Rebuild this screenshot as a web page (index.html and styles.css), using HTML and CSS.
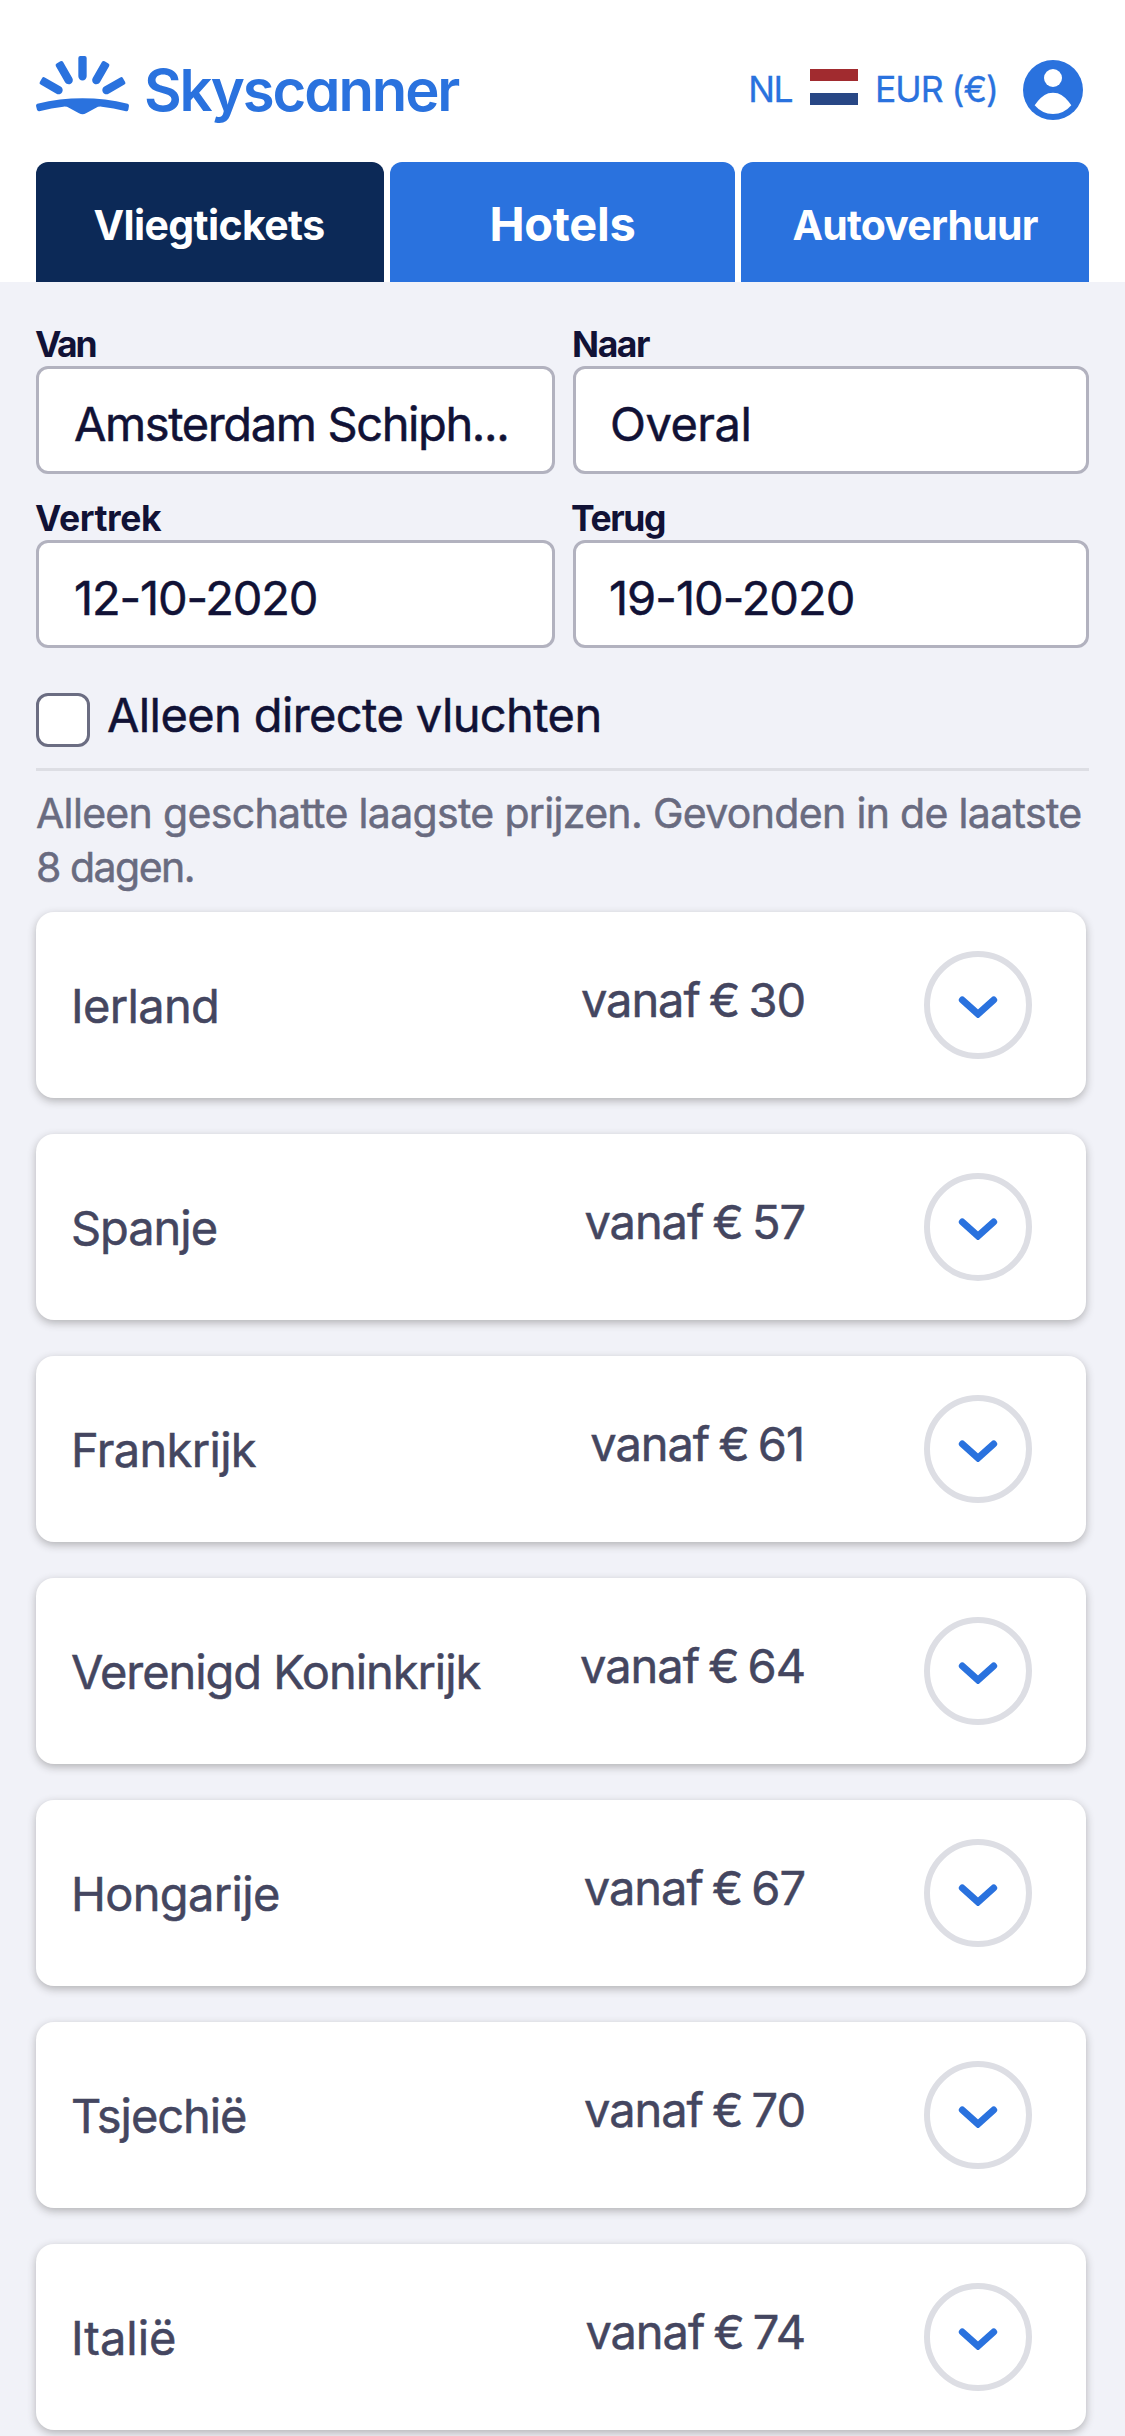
FILE: index.html
```
<!DOCTYPE html>
<html lang="nl">
<head>
<meta charset="utf-8">
<title>Skyscanner</title>
<link rel="stylesheet" href="styles.css">
</head>
<body>
<svg class="defs" width="0" height="0" aria-hidden="true">
  <symbol id="chevron" viewBox="1194 167 120 80">
    <path d="M1207 191L1254 233L1301 191" fill="none" stroke="#2a72de" stroke-width="21" stroke-linecap="round" stroke-linejoin="miter"/>
  </symbol>
</svg>
<header class="header">
  <a class="logo">
    <svg class="logo-mark" viewBox="108 77 279 176" fill="currentColor" aria-hidden="true">
      <defs><path id="ray" d="M241 77h13q6 0 6 6v55a12.5 12.5 0 0 1-25 0v-55q0-6 6-6z"/></defs>
      <use href="#ray"/>
      <use href="#ray" transform="rotate(-30 247.5 221)"/>
      <use href="#ray" transform="rotate(30 247.5 221)"/>
      <use href="#ray" transform="rotate(-60 247.5 221)"/>
      <use href="#ray" transform="rotate(60 247.5 221)"/>
      <path d="M112 220Q247.500 188 383 220q4 1 4 6l-2 12q-2 6-7 4.500Q340 233 305 229q-10-1-18 4L258 249q-10 6-21 0L208 233q-8-5-18-4Q155 233 118 242.500q-5 1-7-4l-3-12q0-5 4-6.500z"/>
    </svg>
    <span class="logo-text">Skyscanner</span>
  </a>
  <div class="settings">
    <span class="locale">NL</span>
    <span class="flag"></span>
    <span class="currency">EUR (€)</span>
    <svg class="avatar" viewBox="969 90 180 180" aria-hidden="true">
      <circle cx="1059" cy="180" r="90" fill="#2a72de"/>
      <circle cx="1059" cy="144" r="27" fill="#fff"/>
      <path fill="#fff" d="M1004 226Q1022 198 1045 189.500Q1059 187 1073 189.500Q1096 198 1114 226Q1092 252 1059 252Q1026 252 1004 226z"/>
    </svg>
  </div>
</header>
<nav class="tabs">
  <a class="tab active">Vliegtickets</a>
  <a class="tab large">Hotels</a>
  <a class="tab">Autoverhuur</a>
</nav>
<main class="main">
  <form class="search">
    <div class="field"><label class="label van">Van</label><div class="input place">Amsterdam Schiph...</div></div>
    <div class="field"><label class="label">Naar</label><div class="input all">Overal</div></div>
    <div class="field"><label class="label vertrek">Vertrek</label><div class="input">12-10-2020</div></div>
    <div class="field"><label class="label terug">Terug</label><div class="input return">19-10-2020</div></div>
  </form>
  <label class="direct"><span class="checkbox"></span><span class="direct-text">Alleen directe vluchten</span></label>
  <hr class="rule">
  <p class="note">Alleen geschatte laagste prijzen. Gevonden in de laatste <span class="note-end">8 dagen.</span></p>
  <ul class="results">
    <li class="card"><span class="country">Ierland</span><span class="price">vanaf € 30</span><span class="toggle"><svg class="chevron"><use href="#chevron"/></svg></span></li>
    <li class="card"><span class="country tight">Spanje</span><span class="price">vanaf € 57</span><span class="toggle"><svg class="chevron"><use href="#chevron"/></svg></span></li>
    <li class="card"><span class="country">Frankrijk</span><span class="price one">vanaf € 61</span><span class="toggle"><svg class="chevron"><use href="#chevron"/></svg></span></li>
    <li class="card"><span class="country tight">Verenigd Koninkrijk</span><span class="price">vanaf € 64</span><span class="toggle"><svg class="chevron"><use href="#chevron"/></svg></span></li>
    <li class="card"><span class="country">Hongarije</span><span class="price">vanaf € 67</span><span class="toggle"><svg class="chevron"><use href="#chevron"/></svg></span></li>
    <li class="card"><span class="country tight">Tsjechië</span><span class="price">vanaf € 70</span><span class="toggle"><svg class="chevron"><use href="#chevron"/></svg></span></li>
    <li class="card"><span class="country loose">Italië</span><span class="price">vanaf € 74</span><span class="toggle"><svg class="chevron"><use href="#chevron"/></svg></span></li>
  </ul>
</main>
</body>
</html>
```
FILE: styles.css
```
* { box-sizing: border-box; }
body {
  margin: 0;
  min-height: 2436px;
  background: #f1f2f8;
  font-family: Inter, "Liberation Sans", sans-serif;
  color: #111236;
  overflow-x: hidden;
}
.defs { display: block; }

.header {
  height: 162px;
  padding: 56px 42px 0 36px;
  display: flex;
  justify-content: space-between;
  align-items: flex-start;
  background: #fff;
  color: #2a72de;
}
.logo { display: flex; align-items: flex-start; gap: 15px; }
.logo-mark { width: 93px; height: 58.7px; }
.logo-text {
  margin-top: 4px;
  font-size: 58px;
  font-weight: 600;
  line-height: 60px;
  letter-spacing: -2.1px;
  font-feature-settings: "cv11";
}
.settings {
  display: flex;
  align-items: center;
  height: 60px;
  margin-top: 4px;
  font-size: 35.5px;
  line-height: 40px;
  -webkit-text-stroke: .3px currentColor;
}
.locale { letter-spacing: -1.5px; }
.flag {
  width: 48px;
  height: 36px;
  margin: 0 17px 6px 18px;
  background: linear-gradient(#a12b2f 0 33%, #fff 34% 66%, #284785 67%);
}
.currency { letter-spacing: -1.03px; }
.avatar { width: 60px; height: 60px; margin-left: 25px; }

.tabs {
  display: grid;
  grid-template-columns: 348px 345px 348px;
  gap: 6px;
  padding: 0 36px;
  background: #fff;
}
.tab {
  display: flex;
  align-items: center;
  justify-content: center;
  height: 120px;
  padding-top: 6px;
  border-radius: 12px 12px 0 0;
  background: #2a72de;
  color: #fff;
  font-size: 41px;
  font-weight: 700;
  letter-spacing: -.8px;
}
.tab.active { padding-right: 2px; background: #0c2957; letter-spacing: -.6px; }
.tab.large { padding-top: 2px; font-size: 47px; letter-spacing: -.28px; }

.main { padding: 44px 36px 0; -webkit-text-stroke: .5px currentColor; }
.search {
  display: grid;
  grid-template-columns: 519px 1fr;
  gap: 26px 18px;
}
.field { display: flex; flex-direction: column; gap: 4px; }
.label {
  padding-top: 2px;
  margin-left: -1px;
  font-size: 35.5px;
  font-weight: 700;
  line-height: 34px;
  letter-spacing: -1.4px;
  -webkit-text-stroke: 0;
}
.label.van { letter-spacing: -2.3px; }
.label.vertrek { letter-spacing: -.4px; }
.label.terug { margin-left: -2px; }
.input {
  display: flex;
  align-items: center;
  height: 108px;
  padding: 6px 0 0 35px;
  border: 3px solid #b2b2bf;
  border-radius: 12px;
  background: #fff;
  font-size: 47px;
  letter-spacing: -1.15px;
  white-space: nowrap;
}
.input.place { letter-spacing: -1.38px; }
.input.all { padding-left: 34px; letter-spacing: -.5px; }
.input.return { padding-left: 33px; letter-spacing: -1px; }

.direct { display: flex; align-items: center; gap: 17px; margin-top: 45px; }
.checkbox {
  width: 54px;
  height: 54px;
  border: 3px solid #6b6d82;
  border-radius: 12px;
  background: #fff;
}
.direct-text {
  height: 54px;
  padding-bottom: 10px;
  font-size: 47px;
  line-height: 44px;
  letter-spacing: -.6px;
}
.rule { height: 3px; margin: 21px 0 15px; border: 0; background: #dddee4; }
.note {
  margin: 0 -6px 18px 0;
  font-size: 41px;
  line-height: 54px;
  letter-spacing: -.67px;
  color: #696b80;
}
.note-end { letter-spacing: -1.5px; }

.results {
  display: flex;
  flex-direction: column;
  gap: 36px;
  width: 1050px;
  margin: 0;
  padding: 0;
  list-style: none;
}
.card {
  display: flex;
  align-items: center;
  height: 186px;
  padding: 0 54px 0 35px;
  border-radius: 18px;
  background: #fff;
  box-shadow: 0 3px 9px rgba(37, 32, 31, .3);
  font-size: 47px;
  color: #444660;
}
.country { flex: 1; letter-spacing: -.67px; }
.country.tight { letter-spacing: -1.06px; }
.country.loose { letter-spacing: 0; }
.price {
  margin-right: 119px;
  padding-bottom: 12px;
  letter-spacing: -1.05px;
  word-spacing: -3px;
}
.price.one { margin-right: 120px; }
.toggle {
  display: flex;
  align-items: center;
  justify-content: center;
  width: 108px;
  height: 108px;
  border: 6px solid #dddee4;
  border-radius: 50%;
}
.chevron { width: 40px; height: 26.7px; }
```
